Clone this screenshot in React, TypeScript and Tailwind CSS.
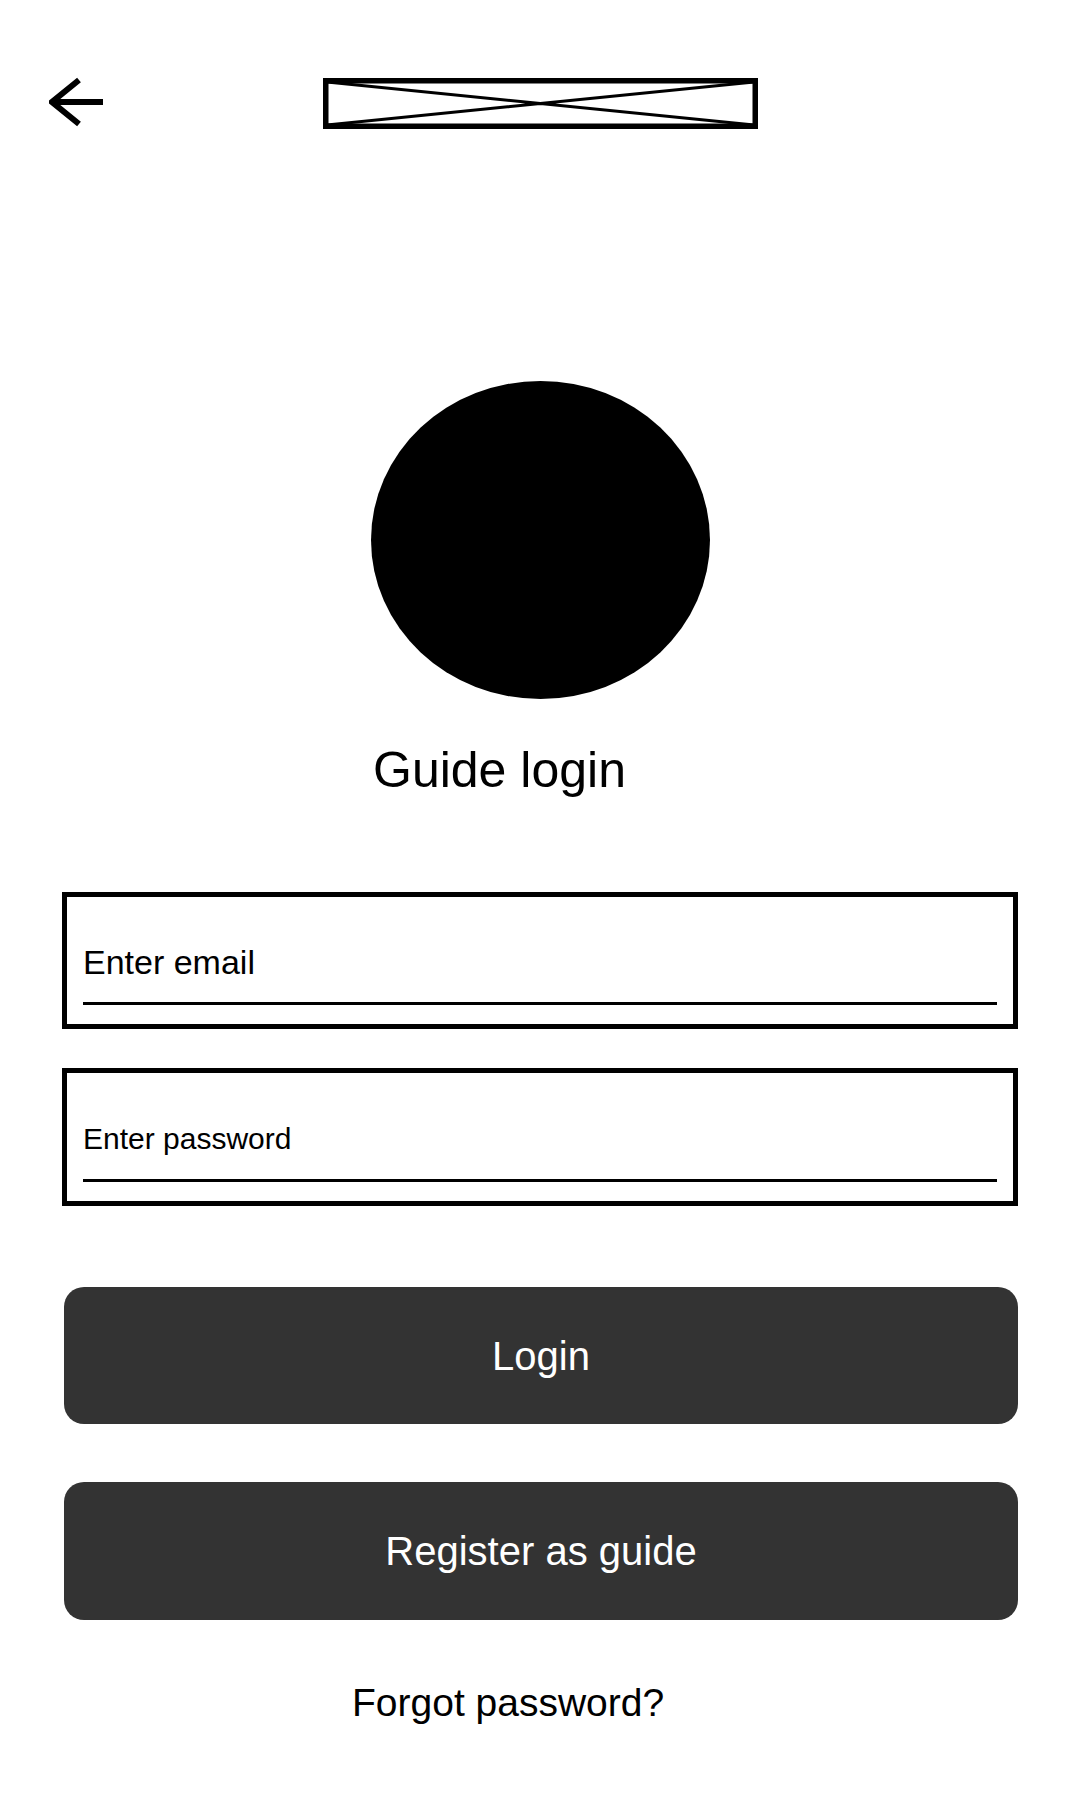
import React from 'react';

const BackArrow = () => (
  <svg width="56" height="50" viewBox="0 0 56 50" fill="none" stroke="black" strokeWidth="6">
    <path d="M30 3 L3 25 L30 47" strokeLinejoin="miter" />
    <path d="M3 25 H54" />
  </svg>
);

const LogoPlaceholder = () => (
  <svg width="435" height="51" viewBox="0 0 435 51" fill="none" stroke="black">
    <rect x="2.75" y="2.75" width="429.5" height="45.5" strokeWidth="5.5" />
    <path d="M4 4 L431 47 M4 47 L431 4" strokeWidth="3" />
  </svg>
);

const Field: React.FC<{ placeholder: string; type: string; size: string; height: string }> = ({
  placeholder,
  type,
  size,
  height,
}) => (
  <div className={`ml-[62px] w-[956px] ${height} border-[5px] border-black px-4 pb-[19px] flex flex-col justify-end`}>
    <input
      type={type}
      placeholder={placeholder}
      className={`w-full h-[63px] pb-5 bg-transparent border-b-[3px] border-black outline-none ${size} text-black placeholder:text-black`}
    />
  </div>
);

export default function App() {
  return (
    <div className="w-[1080px] min-h-[1800px] bg-white text-black font-['Liberation_Sans',Arial,sans-serif]">
      {/* top bar */}
      <div className="flex items-start pt-[77px] pl-[49px]">
        <button className="shrink-0">
          <BackArrow />
        </button>
        <div className="ml-[218px] mt-px">
          <LogoPlaceholder />
        </div>
      </div>

      {/* avatar */}
      <div className="mt-[252px] mx-auto w-[339px] h-[318px] rounded-[50%] bg-black" />

      <h1 className="mt-[46px] pl-[373px] text-[50px] leading-none font-normal">Guide login</h1>

      <div className="mt-[97px]">
        <Field placeholder="Enter email" type="email" size="text-[34px]" height="h-[137px]" />
      </div>
      <div className="mt-[39px]">
        <Field placeholder="Enter password" type="password" size="text-[30px]" height="h-[138px]" />
      </div>

      <button className="mt-[81px] ml-[64px] w-[954px] h-[137px] rounded-[20px] bg-[#333333] text-white text-[40px] leading-none flex items-center justify-center">
        Login
      </button>
      <button className="mt-[58px] ml-[64px] w-[954px] h-[138px] rounded-[20px] bg-[#333333] text-white text-[40px] leading-none flex items-center justify-center">
        Register as guide
      </button>

      <p className="mt-[63px] pl-[352px] text-[39px] leading-none">Forgot password?</p>
    </div>
  );
}
